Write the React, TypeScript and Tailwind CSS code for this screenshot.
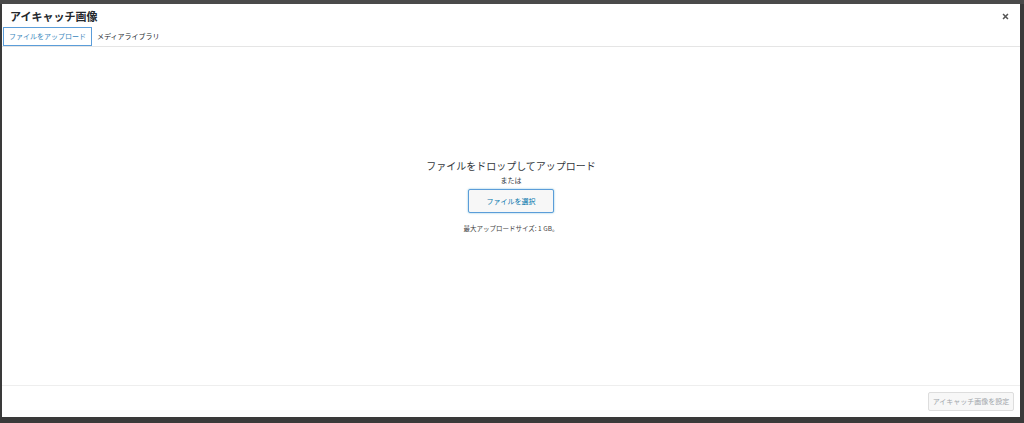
import React from 'react';

export default function App() {
  return (
    <div
      className="w-[1024px] h-[423px] bg-[#3a3a3a] relative overflow-hidden"
      style={{ fontFamily: '"Noto Sans CJK JP", "Noto Sans", sans-serif' }}
    >
      {/* faint admin bar behind the backdrop */}
      <div className="h-[4px] bg-[#4a4a4a]" />
      <div className="absolute left-[2px] top-[4px] w-[1018px] h-[413px] bg-white flex flex-col">
        {/* Header */}
        <div className="flex items-center justify-between pl-[8px] pr-[10px] h-[24px]">
          <h1 className="text-[11px] font-bold text-[#23282d] leading-none">アイキャッチ画像</h1>
          <svg width="7" height="7" viewBox="0 0 10 10" className="mr-[1px]">
            <path d="M1.5 1.5 L8.5 8.5 M8.5 1.5 L1.5 8.5" stroke="#555" strokeWidth="2.2" />
          </svg>
        </div>
        {/* Tabs */}
        <div className="flex items-end border-b border-[#e5e5e5] h-[19px] pl-[1px]">
          <div className="h-[19px] px-[5px] flex items-center border border-[#5b9dd9] text-[7px] text-[#3a87bd] bg-white">
            ファイルをアップロード
          </div>
          <div className="h-[19px] px-[5px] flex items-center text-[7px] text-[#23282d]">
            メディアライブラリ
          </div>
        </div>
        {/* Uploader */}
        <div className="flex-1 flex flex-col items-center pt-[114px]">
          <p className="text-[10px] text-[#32373c] leading-none">ファイルをドロップしてアップロード</p>
          <p className="text-[7px] text-[#32373c] mt-[6px] leading-none">または</p>
          <button className="mt-[5px] w-[86px] h-[24px] border border-[#5b9dd9] rounded-[2px] bg-[#f7f7f7] text-[7px] text-[#0073aa] shadow-[0_0_2px_rgba(30,140,190,0.6)]">
            ファイルを選択
          </button>
          <p className="text-[6.5px] text-[#444] mt-[12px] leading-none">最大アップロードサイズ: 1 GB。</p>
        </div>
        {/* Footer */}
        <div className="h-[32px] border-t border-[#eee] flex items-center justify-end pr-[6px]">
          <button className="w-[86px] h-[19px] border border-[#ddd] rounded-[2px] bg-[#f7f7f7] text-[7px] text-[#a0a5aa]">
            アイキャッチ画像を設定
          </button>
        </div>
      </div>
    </div>
  );
}
